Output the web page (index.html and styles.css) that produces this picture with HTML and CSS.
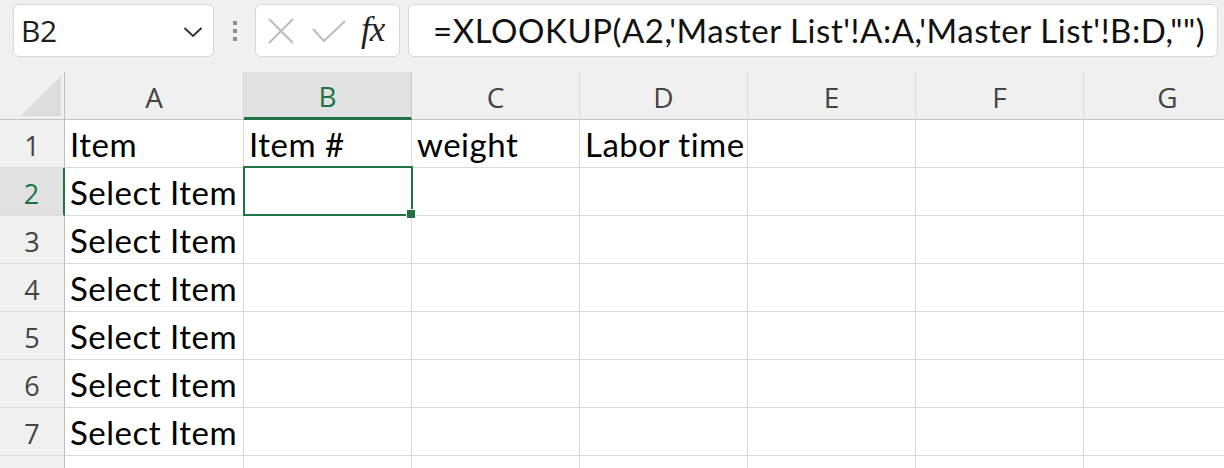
FILE: index.html
```html
<!DOCTYPE html>
<html>
<head>
<meta charset="utf-8">
<link rel="stylesheet" href="styles.css">
</head>
<body>
<div class="app">
  <div class="toolbar">
    <div class="namebox">
      <span class="name">B2</span>
      <svg class="chev" width="20" height="12" viewBox="0 0 20 12"><path d="M1.5 2 L10 10 L18.5 2" fill="none" stroke="#333" stroke-width="2"/></svg>
    </div>
    <div class="grip"><i></i><i></i><i></i></div>
    <div class="fxbox">
      <svg width="26" height="26" viewBox="0 0 26 26"><path d="M1 1 L25 25 M25 1 L1 25" stroke="#bcbcbc" stroke-width="2" fill="none"/></svg>
      <svg width="34" height="24" viewBox="0 0 34 24"><path d="M1 10 L12 22 L33 2" stroke="#bcbcbc" stroke-width="2" fill="none"/></svg>
      <span class="fx">fx</span>
    </div>
    <div class="formula">=XLOOKUP(A2,'Master List'!A:A,'Master List'!B:D,"")</div>
  </div>
  <div class="sheet">
    <div class="corner"><span class="tri"></span></div>
    <div class="ch">A</div>
    <div class="ch sel">B</div>
    <div class="ch">C</div>
    <div class="ch">D</div>
    <div class="ch">E</div>
    <div class="ch">F</div>
    <div class="ch">G</div>

    <div class="rh">1</div>
    <div class="c">Item</div><div class="c">Item #</div><div class="c">weight</div><div class="c">Labor time</div><div class="c"></div><div class="c"></div><div class="c"></div>

    <div class="rh sel">2</div>
    <div class="c">Select Item</div><div class="c active"><span class="handle"></span></div><div class="c"></div><div class="c"></div><div class="c"></div><div class="c"></div><div class="c"></div>

    <div class="rh">3</div>
    <div class="c">Select Item</div><div class="c"></div><div class="c"></div><div class="c"></div><div class="c"></div><div class="c"></div><div class="c"></div>

    <div class="rh">4</div>
    <div class="c">Select Item</div><div class="c"></div><div class="c"></div><div class="c"></div><div class="c"></div><div class="c"></div><div class="c"></div>

    <div class="rh">5</div>
    <div class="c">Select Item</div><div class="c"></div><div class="c"></div><div class="c"></div><div class="c"></div><div class="c"></div><div class="c"></div>

    <div class="rh">6</div>
    <div class="c">Select Item</div><div class="c"></div><div class="c"></div><div class="c"></div><div class="c"></div><div class="c"></div><div class="c"></div>

    <div class="rh">7</div>
    <div class="c">Select Item</div><div class="c"></div><div class="c"></div><div class="c"></div><div class="c"></div><div class="c"></div><div class="c"></div>

    <div class="rh"></div>
    <div class="c"></div><div class="c"></div><div class="c"></div><div class="c"></div><div class="c"></div><div class="c"></div><div class="c"></div>
  </div>
</div>
</body>
</html>
```

FILE: styles.css
```css
html, body {
  margin: 0;
  padding: 0;
  background: #f0f0f0;
  overflow: hidden;
}
.app {
  width: 1224px;
  height: 468px;
  overflow: hidden;
  font-family: "Lato", "Open Sans", sans-serif;
}
.toolbar {
  height: 72px;
  display: flex;
  align-items: flex-start;
  padding-top: 4px;
  padding-left: 13px;
  box-sizing: border-box;
}
.namebox {
  width: 201px;
  height: 53px;
  box-sizing: border-box;
  background: #fff;
  border: 1px solid #d6d6d6;
  border-radius: 6px;
  display: flex;
  align-items: center;
  justify-content: space-between;
  padding: 0 10px 0 7px;
}
.name {
  font-family: "Open Sans", sans-serif;
  font-size: 30px;
  color: #1e1e1e;
  letter-spacing: -0.5px;
}
.chev { margin-top: 2px; }
.grip {
  width: 41px;
  height: 53px;
  display: flex;
  flex-direction: column;
  align-items: center;
  justify-content: center;
  gap: 4px;
}
.grip i {
  display: block;
  width: 4px;
  height: 4px;
  background: #8e8e8e;
}
.fxbox {
  width: 145px;
  height: 53px;
  box-sizing: border-box;
  background: #fff;
  border: 1px solid #d6d6d6;
  border-radius: 6px;
  display: flex;
  align-items: center;
  padding-left: 12px;
  gap: 18px;
}
.fx {
  font-family: "Liberation Serif", serif;
  font-style: italic;
  font-size: 35px;
  color: #222;
  margin-left: -3px;
  letter-spacing: -1px;
  margin-top: -2px;
}
.formula {
  margin-left: 8px;
  flex: 1;
  height: 53px;
  box-sizing: border-box;
  background: #fff;
  border: 1px solid #d6d6d6;
  border-radius: 6px;
  margin-right: 6px;
  font-family: "Lato", sans-serif;
  font-size: 33px;
  color: #111;
  padding-left: 24px;
  line-height: 51px;
  white-space: nowrap;
  overflow: hidden;
  letter-spacing: 0.55px;
}
.sheet {
  display: grid;
  grid-template-columns: 65px 179px repeat(5, 168px) 168px;
  grid-template-rows: 48px repeat(7, 48px) 48px;
}
.corner {
  background: #f0f0f0;
  border-right: 1px solid #bdbdbd;
  border-bottom: 1px solid #c4c4c4;
  box-sizing: border-box;
  position: relative;
}
.tri {
  position: absolute;
  right: 3px;
  bottom: 3px;
  width: 0;
  height: 0;
  border-style: solid;
  border-width: 0 0 40px 40px;
  border-color: transparent transparent #dcdcdc transparent;
}
.ch {
  background: #f0f0f0;
  border-right: 1px solid #dadada;
  border-bottom: 1px solid #c4c4c4;
  box-sizing: border-box;
  display: flex;
  align-items: center;
  justify-content: center;
  font-family: "Open Sans", sans-serif;
  font-size: 28px;
  color: #444;
  padding-top: 2px;
}
.ch.sel {
  background: #e1e1e1;
  color: #217346;
  border-bottom: 3px solid #217346;
  border-right-color: #c8c8c8;
}
.rh {
  background: #f0f0f0;
  border-right: 1px solid #bdbdbd;
  border-bottom: 1px solid #dedede;
  box-sizing: border-box;
  display: flex;
  align-items: center;
  justify-content: center;
  font-family: "Open Sans", sans-serif;
  font-size: 27px;
  color: #444;
  padding-top: 3px;
}
.rh.sel {
  background: #e1e1e1;
  color: #217346;
  border-right: 2px solid #217346;
}
.c {
  background: #fff;
  border-right: 1px solid #dadada;
  border-bottom: 1px solid #dadada;
  box-sizing: border-box;
  font-family: "Lato", sans-serif;
  font-size: 33px;
  color: #000;
  padding-left: 5px;
  display: flex;
  align-items: flex-end;
  padding-bottom: 3px;
  white-space: nowrap;
  overflow: visible;
  letter-spacing: 0.5px;
}
.c.active {
  position: relative;
  overflow: visible;
}
.c.active::before {
  content: "";
  position: absolute;
  left: -1px;
  top: -2px;
  right: -2px;
  bottom: -1px;
  border: 2px solid #217346;
  pointer-events: none;
}
.handle {
  position: absolute;
  right: -5px;
  bottom: -4px;
  width: 8px;
  height: 8px;
  background: #217346;
  border: 1px solid #fff;
  z-index: 2;
}
```
